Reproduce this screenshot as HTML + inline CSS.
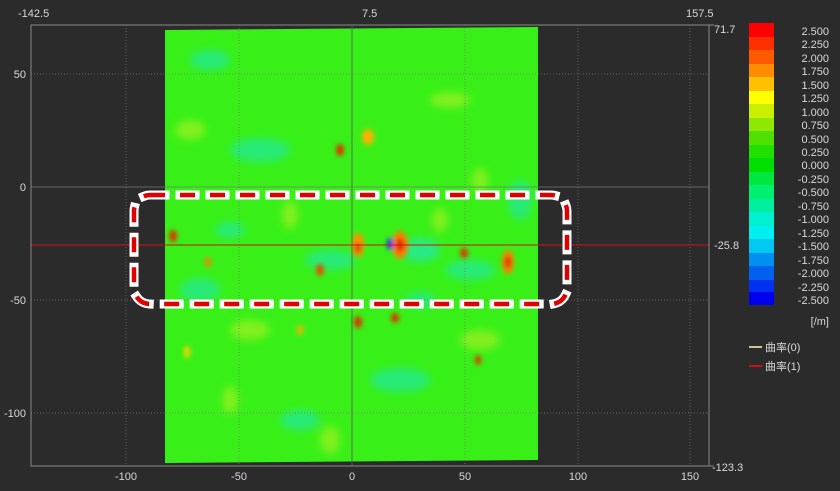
<!DOCTYPE html>
<html><head><meta charset="utf-8"><style>
html,body{margin:0;padding:0;background:#2b2b2b;}
svg{display:block}
text{font-family:"Liberation Sans","Noto Sans CJK JP",sans-serif;fill:#d8d8d8;font-size:11px}
</style></head><body>
<svg width="840" height="491" viewBox="0 0 840 491" xmlns="http://www.w3.org/2000/svg">
<defs>
<filter id="b" x="-50%" y="-50%" width="200%" height="200%"><feGaussianBlur stdDeviation="2.5"/></filter>
<filter id="b2" x="-50%" y="-50%" width="200%" height="200%"><feGaussianBlur stdDeviation="4"/></filter>
</defs>
<rect width="840" height="491" fill="#2b2b2b"/>
<polygon points="165,30 538,27 538,440 538,460 165,463" fill="#38f018"/>
<g filter="url(#b2)" opacity="0.7">
<ellipse cx="200" cy="290" rx="20" ry="12" fill="#20e8a0"/>
<ellipse cx="330" cy="260" rx="25" ry="10" fill="#20e8a0"/>
<ellipse cx="420" cy="250" rx="20" ry="12" fill="#20e8b0"/>
<ellipse cx="470" cy="270" rx="25" ry="10" fill="#20e8a0"/>
<ellipse cx="260" cy="150" rx="30" ry="12" fill="#20e8a0"/>
<ellipse cx="400" cy="380" rx="30" ry="12" fill="#20e8a0"/>
<ellipse cx="300" cy="420" rx="20" ry="10" fill="#20e8a0"/>
<ellipse cx="230" cy="230" rx="15" ry="8" fill="#20e8a0"/>
<ellipse cx="520" cy="200" rx="12" ry="20" fill="#20e8a0"/>
<ellipse cx="210" cy="60" rx="20" ry="10" fill="#20e8a0"/>
<ellipse cx="420" cy="300" rx="15" ry="8" fill="#20e8a0"/>
<ellipse cx="190" cy="130" rx="15" ry="10" fill="#a0f020"/>
<ellipse cx="450" cy="100" rx="20" ry="8" fill="#a0f020"/>
<ellipse cx="250" cy="330" rx="20" ry="10" fill="#a0f020"/>
<ellipse cx="480" cy="340" rx="20" ry="10" fill="#a0f020"/>
<ellipse cx="290" cy="215" rx="8" ry="14" fill="#a0f020"/>
<ellipse cx="440" cy="220" rx="8" ry="12" fill="#a0f020"/>
<ellipse cx="330" cy="440" rx="10" ry="14" fill="#a0f020"/>
<ellipse cx="230" cy="400" rx="8" ry="14" fill="#a0f020"/>
<ellipse cx="480" cy="180" rx="8" ry="12" fill="#a0f020"/>
</g>
<g filter="url(#b)">
<ellipse cx="400" cy="245" rx="8" ry="14" fill="#ff8000"/>
<ellipse cx="400" cy="245" rx="4" ry="7" fill="#e02000"/>
<ellipse cx="358" cy="245" rx="6" ry="12" fill="#ff9000"/>
<ellipse cx="358" cy="248" rx="3" ry="5" fill="#e03000"/>
<ellipse cx="390" cy="244" rx="3" ry="6" fill="#1020ff"/>
<ellipse cx="508" cy="262" rx="6" ry="12" fill="#ff8000"/>
<ellipse cx="508" cy="262" rx="3" ry="6" fill="#e02000"/>
<ellipse cx="464" cy="253" rx="4" ry="5" fill="#e03000"/>
<ellipse cx="173" cy="236" rx="4" ry="6" fill="#e03000"/>
<ellipse cx="320" cy="270" rx="4" ry="6" fill="#e05000"/>
<ellipse cx="340" cy="150" rx="4" ry="6" fill="#e03000"/>
<ellipse cx="358" cy="322" rx="4" ry="6" fill="#e03000"/>
<ellipse cx="395" cy="318" rx="4" ry="5" fill="#e03000"/>
<ellipse cx="478" cy="360" rx="3" ry="5" fill="#e03000"/>
<ellipse cx="208" cy="262" rx="3" ry="5" fill="#ff8000"/>
<ellipse cx="368" cy="137" rx="6" ry="8" fill="#ffb000"/>
<ellipse cx="300" cy="330" rx="3" ry="5" fill="#ffb000"/>
<ellipse cx="187" cy="352" rx="3" ry="6" fill="#ffd000"/>
</g>
<g stroke="#777" stroke-width="0.8" stroke-dasharray="1,2">
<line x1="126" y1="25" x2="126" y2="466"/><line x1="239" y1="25" x2="239" y2="466"/>
<line x1="465" y1="25" x2="465" y2="466"/><line x1="578" y1="25" x2="578" y2="466"/><line x1="690" y1="25" x2="690" y2="466"/>
<line x1="31" y1="74" x2="709" y2="74"/><line x1="31" y1="300" x2="709" y2="300"/><line x1="31" y1="413" x2="709" y2="413"/>
</g>
<line x1="352" y1="25" x2="352" y2="466" stroke="#555" stroke-width="0.8"/>
<line x1="31" y1="187" x2="709" y2="187" stroke="#777" stroke-width="0.8"/>
<line x1="31" y1="245" x2="709" y2="245" stroke="#d01010" stroke-width="1"/>
<path d="M31,25 H709 V466 H31 Z" fill="none" stroke="#888" stroke-width="1"/>
<rect x="134" y="195" width="433" height="109" rx="16" fill="none" stroke="#fff" stroke-width="9" stroke-dasharray="15,15" stroke-linecap="square"/>
<rect x="134" y="195" width="433" height="109" rx="16" fill="none" stroke="#e00000" stroke-width="4.5" stroke-dasharray="15,15"/>
<text x="18" y="17">-142.5</text><text x="362" y="17">7.5</text><text x="686" y="17">157.5</text>
<text x="26" y="78" text-anchor="end">50</text><text x="26" y="191" text-anchor="end">0</text>
<text x="26" y="304" text-anchor="end">-50</text><text x="26" y="417" text-anchor="end">-100</text>
<text x="126" y="480" text-anchor="middle">-100</text><text x="239" y="480" text-anchor="middle">-50</text>
<text x="352" y="480" text-anchor="middle">0</text><text x="465" y="480" text-anchor="middle">50</text>
<text x="578" y="480" text-anchor="middle">100</text><text x="690" y="480" text-anchor="middle">150</text>
<text x="714" y="33">71.7</text><text x="714" y="249">-25.8</text><text x="712" y="471">-123.3</text>
<line x1="709" y1="25" x2="714" y2="25" stroke="#888"/><line x1="709" y1="466" x2="714" y2="466" stroke="#888"/>
<g>
<rect x="749" y="23" width="25" height="14" fill="#ff0000"/>
<rect x="749" y="37" width="25" height="14" fill="#ff3000"/>
<rect x="749" y="50" width="25" height="14" fill="#ff5a00"/>
<rect x="749" y="64" width="25" height="14" fill="#ff8c00"/>
<rect x="749" y="77" width="25" height="14" fill="#ffc000"/>
<rect x="749" y="91" width="25" height="14" fill="#ffff00"/>
<rect x="749" y="104" width="25" height="14" fill="#c8f000"/>
<rect x="749" y="118" width="25" height="14" fill="#90e800"/>
<rect x="749" y="131" width="25" height="14" fill="#50e000"/>
<rect x="749" y="145" width="25" height="14" fill="#20e000"/>
<rect x="749" y="158" width="25" height="14" fill="#00e000"/>
<rect x="749" y="172" width="25" height="14" fill="#00e840"/>
<rect x="749" y="185" width="25" height="14" fill="#00f070"/>
<rect x="749" y="199" width="25" height="14" fill="#00f0a0"/>
<rect x="749" y="212" width="25" height="14" fill="#00f0d0"/>
<rect x="749" y="226" width="25" height="14" fill="#00f0f0"/>
<rect x="749" y="239" width="25" height="14" fill="#00c8f0"/>
<rect x="749" y="253" width="25" height="14" fill="#0090f0"/>
<rect x="749" y="266" width="25" height="14" fill="#0060f0"/>
<rect x="749" y="280" width="25" height="13" fill="#0030f0"/>
<rect x="749" y="292" width="25" height="13" fill="#0000f0"/>
</g>
<g text-anchor="end" font-size="10.5">
<text x="829" y="35">2.500</text><text x="829" y="48">2.250</text><text x="829" y="62">2.000</text>
<text x="829" y="75">1.750</text><text x="829" y="89">1.500</text><text x="829" y="102">1.250</text>
<text x="829" y="116">1.000</text><text x="829" y="129">0.750</text><text x="829" y="143">0.500</text>
<text x="829" y="156">0.250</text><text x="829" y="169">0.000</text><text x="829" y="183">-0.250</text>
<text x="829" y="196">-0.500</text><text x="829" y="210">-0.750</text><text x="829" y="223">-1.000</text>
<text x="829" y="237">-1.250</text><text x="829" y="250">-1.500</text><text x="829" y="264">-1.750</text>
<text x="829" y="277">-2.000</text><text x="829" y="291">-2.250</text><text x="829" y="304">-2.500</text>
<text x="829" y="325">[/m]</text>
</g>
<line x1="749" y1="347" x2="762" y2="347" stroke="#c8c890" stroke-width="2"/>
<text x="765" y="351" font-size="10.5">曲率(0)</text>
<line x1="749" y1="366" x2="762" y2="366" stroke="#d01010" stroke-width="2"/>
<text x="765" y="370" font-size="10.5">曲率(1)</text>
</svg>
</body></html>
